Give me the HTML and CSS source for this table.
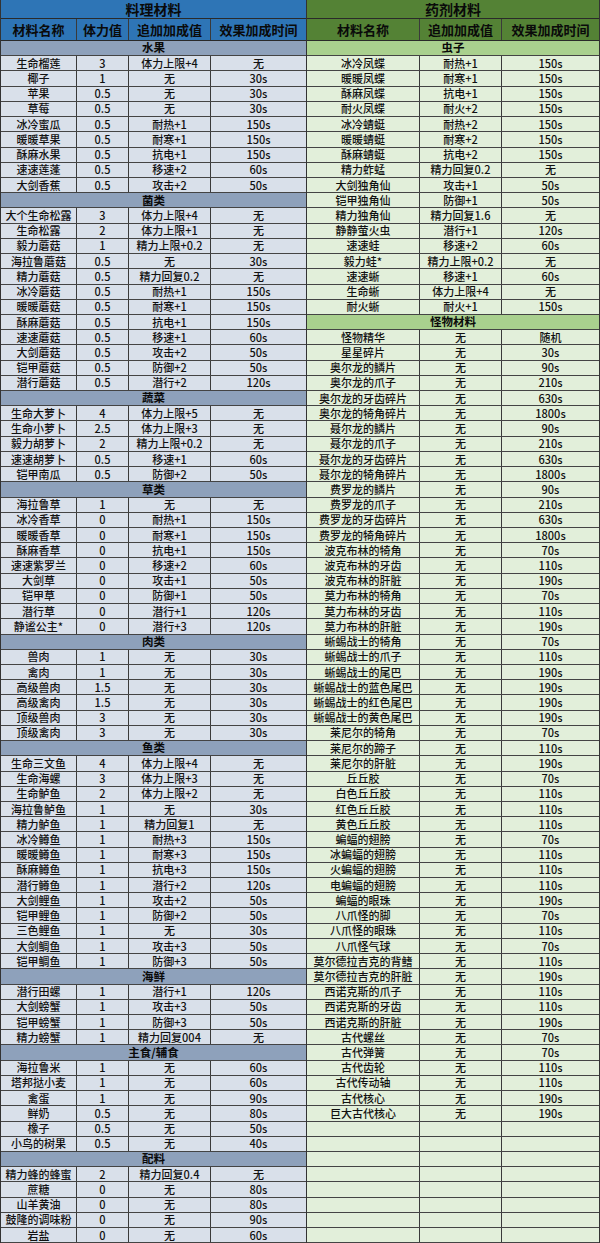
FILE: index.html
```html
<!DOCTYPE html>
<html lang="zh-CN">
<head>
<meta charset="utf-8">
<title>材料表</title>
<link rel="stylesheet" href="styles.css">
</head>
<body>
<div class="sheet">
  <section class="panel cook">
    <div class="title">料理材料</div>
    <div class="row head"><span>材料名称</span><span>体力值</span><span>追加加成值</span><span>效果加成时间</span></div>
    <div class="row cat">水果</div>
    <div class="row"><span>生命榴莲</span><span>3</span><span>体力上限+4</span><span>无</span></div>
    <div class="row"><span>椰子</span><span>1</span><span>无</span><span>30s</span></div>
    <div class="row"><span>苹果</span><span>0.5</span><span>无</span><span>30s</span></div>
    <div class="row"><span>草莓</span><span>0.5</span><span>无</span><span>30s</span></div>
    <div class="row"><span>冰冷蜜瓜</span><span>0.5</span><span>耐热+1</span><span>150s</span></div>
    <div class="row"><span>暖暖草果</span><span>0.5</span><span>耐寒+1</span><span>150s</span></div>
    <div class="row"><span>酥麻水果</span><span>0.5</span><span>抗电+1</span><span>150s</span></div>
    <div class="row"><span>速速莲蓬</span><span>0.5</span><span>移速+2</span><span>60s</span></div>
    <div class="row"><span>大剑香蕉</span><span>0.5</span><span>攻击+2</span><span>50s</span></div>
    <div class="row cat">菌类</div>
    <div class="row"><span>大个生命松露</span><span>3</span><span>体力上限+4</span><span>无</span></div>
    <div class="row"><span>生命松露</span><span>2</span><span>体力上限+1</span><span>无</span></div>
    <div class="row"><span>毅力蘑菇</span><span>1</span><span>精力上限+0.2</span><span>无</span></div>
    <div class="row"><span>海拉鲁蘑菇</span><span>0.5</span><span>无</span><span>30s</span></div>
    <div class="row"><span>精力蘑菇</span><span>0.5</span><span>精力回复0.2</span><span>无</span></div>
    <div class="row"><span>冰冷蘑菇</span><span>0.5</span><span>耐热+1</span><span>150s</span></div>
    <div class="row"><span>暖暖蘑菇</span><span>0.5</span><span>耐寒+1</span><span>150s</span></div>
    <div class="row"><span>酥麻蘑菇</span><span>0.5</span><span>抗电+1</span><span>150s</span></div>
    <div class="row"><span>速速蘑菇</span><span>0.5</span><span>移速+1</span><span>60s</span></div>
    <div class="row"><span>大剑蘑菇</span><span>0.5</span><span>攻击+2</span><span>50s</span></div>
    <div class="row"><span>铠甲蘑菇</span><span>0.5</span><span>防御+2</span><span>50s</span></div>
    <div class="row"><span>潜行蘑菇</span><span>0.5</span><span>潜行+2</span><span>120s</span></div>
    <div class="row cat">蔬菜</div>
    <div class="row"><span>生命大萝卜</span><span>4</span><span>体力上限+5</span><span>无</span></div>
    <div class="row"><span>生命小萝卜</span><span>2.5</span><span>体力上限+3</span><span>无</span></div>
    <div class="row"><span>毅力胡萝卜</span><span>2</span><span>精力上限+0.2</span><span>无</span></div>
    <div class="row"><span>速速胡萝卜</span><span>0.5</span><span>移速+1</span><span>60s</span></div>
    <div class="row"><span>铠甲南瓜</span><span>0.5</span><span>防御+2</span><span>50s</span></div>
    <div class="row cat">草类</div>
    <div class="row"><span>海拉鲁草</span><span>1</span><span>无</span><span>无</span></div>
    <div class="row"><span>冰冷香草</span><span>0</span><span>耐热+1</span><span>150s</span></div>
    <div class="row"><span>暖暖香草</span><span>0</span><span>耐寒+1</span><span>150s</span></div>
    <div class="row"><span>酥麻香草</span><span>0</span><span>抗电+1</span><span>150s</span></div>
    <div class="row"><span>速速紫罗兰</span><span>0</span><span>移速+2</span><span>60s</span></div>
    <div class="row"><span>大剑草</span><span>0</span><span>攻击+1</span><span>50s</span></div>
    <div class="row"><span>铠甲草</span><span>0</span><span>防御+1</span><span>50s</span></div>
    <div class="row"><span>潜行草</span><span>0</span><span>潜行+1</span><span>120s</span></div>
    <div class="row"><span>静谧公主*</span><span>0</span><span>潜行+3</span><span>120s</span></div>
    <div class="row cat">肉类</div>
    <div class="row"><span>兽肉</span><span>1</span><span>无</span><span>30s</span></div>
    <div class="row"><span>禽肉</span><span>1</span><span>无</span><span>30s</span></div>
    <div class="row"><span>高级兽肉</span><span>1.5</span><span>无</span><span>30s</span></div>
    <div class="row"><span>高级禽肉</span><span>1.5</span><span>无</span><span>30s</span></div>
    <div class="row"><span>顶级兽肉</span><span>3</span><span>无</span><span>30s</span></div>
    <div class="row"><span>顶级禽肉</span><span>3</span><span>无</span><span>30s</span></div>
    <div class="row cat">鱼类</div>
    <div class="row"><span>生命三文鱼</span><span>4</span><span>体力上限+4</span><span>无</span></div>
    <div class="row"><span>生命海螺</span><span>3</span><span>体力上限+3</span><span>无</span></div>
    <div class="row"><span>生命鲈鱼</span><span>2</span><span>体力上限+2</span><span>无</span></div>
    <div class="row"><span>海拉鲁鲈鱼</span><span>1</span><span>无</span><span>30s</span></div>
    <div class="row"><span>精力鲈鱼</span><span>1</span><span>精力回复1</span><span>无</span></div>
    <div class="row"><span>冰冷鳟鱼</span><span>1</span><span>耐热+3</span><span>150s</span></div>
    <div class="row"><span>暖暖鳟鱼</span><span>1</span><span>耐寒+3</span><span>150s</span></div>
    <div class="row"><span>酥麻鳟鱼</span><span>1</span><span>抗电+3</span><span>150s</span></div>
    <div class="row"><span>潜行鳟鱼</span><span>1</span><span>潜行+2</span><span>120s</span></div>
    <div class="row"><span>大剑鲤鱼</span><span>1</span><span>攻击+2</span><span>50s</span></div>
    <div class="row"><span>铠甲鲤鱼</span><span>1</span><span>防御+2</span><span>50s</span></div>
    <div class="row"><span>三色鲤鱼</span><span>1</span><span>无</span><span>30s</span></div>
    <div class="row"><span>大剑鲷鱼</span><span>1</span><span>攻击+3</span><span>50s</span></div>
    <div class="row"><span>铠甲鲷鱼</span><span>1</span><span>防御+3</span><span>50s</span></div>
    <div class="row cat">海鲜</div>
    <div class="row"><span>潜行田螺</span><span>1</span><span>潜行+1</span><span>120s</span></div>
    <div class="row"><span>大剑螃蟹</span><span>1</span><span>攻击+3</span><span>50s</span></div>
    <div class="row"><span>铠甲螃蟹</span><span>1</span><span>防御+3</span><span>50s</span></div>
    <div class="row"><span>精力螃蟹</span><span>1</span><span>精力回复004</span><span>无</span></div>
    <div class="row cat">主食/辅食</div>
    <div class="row"><span>海拉鲁米</span><span>1</span><span>无</span><span>60s</span></div>
    <div class="row"><span>塔邦挞小麦</span><span>1</span><span>无</span><span>60s</span></div>
    <div class="row"><span>禽蛋</span><span>1</span><span>无</span><span>90s</span></div>
    <div class="row"><span>鲜奶</span><span>0.5</span><span>无</span><span>80s</span></div>
    <div class="row"><span>橡子</span><span>0.5</span><span>无</span><span>50s</span></div>
    <div class="row"><span>小鸟的树果</span><span>0.5</span><span>无</span><span>40s</span></div>
    <div class="row cat">配料</div>
    <div class="row"><span>精力蜂的蜂蜜</span><span>2</span><span>精力回复0.4</span><span>无</span></div>
    <div class="row"><span>蔗糖</span><span>0</span><span>无</span><span>80s</span></div>
    <div class="row"><span>山羊黄油</span><span>0</span><span>无</span><span>80s</span></div>
    <div class="row"><span>鼓隆的调味粉</span><span>0</span><span>无</span><span>90s</span></div>
    <div class="row"><span>岩盐</span><span>0</span><span>无</span><span>60s</span></div>
  </section>
  <section class="panel potion">
    <div class="title">药剂材料</div>
    <div class="row head"><span>材料名称</span><span>追加加成值</span><span>效果加成时间</span></div>
    <div class="row cat">虫子</div>
    <div class="row"><span>冰冷凤蝶</span><span>耐热+1</span><span>150s</span></div>
    <div class="row"><span>暖暖凤蝶</span><span>耐寒+1</span><span>150s</span></div>
    <div class="row"><span>酥麻凤蝶</span><span>抗电+1</span><span>150s</span></div>
    <div class="row"><span>耐火凤蝶</span><span>耐火+2</span><span>150s</span></div>
    <div class="row"><span>冰冷蜻蜓</span><span>耐热+2</span><span>150s</span></div>
    <div class="row"><span>暖暖蜻蜓</span><span>耐寒+2</span><span>150s</span></div>
    <div class="row"><span>酥麻蜻蜓</span><span>抗电+2</span><span>150s</span></div>
    <div class="row"><span>精力蚱蜢</span><span>精力回复0.2</span><span>无</span></div>
    <div class="row"><span>大剑独角仙</span><span>攻击+1</span><span>50s</span></div>
    <div class="row"><span>铠甲独角仙</span><span>防御+1</span><span>50s</span></div>
    <div class="row"><span>精力独角仙</span><span>精力回复1.6</span><span>无</span></div>
    <div class="row"><span>静静萤火虫</span><span>潜行+1</span><span>120s</span></div>
    <div class="row"><span>速速蛙</span><span>移速+2</span><span>60s</span></div>
    <div class="row"><span>毅力蛙*</span><span>精力上限+0.2</span><span>无</span></div>
    <div class="row"><span>速速蜥</span><span>移速+1</span><span>60s</span></div>
    <div class="row"><span>生命蜥</span><span>体力上限+4</span><span>无</span></div>
    <div class="row"><span>耐火蜥</span><span>耐火+1</span><span>150s</span></div>
    <div class="row cat">怪物材料</div>
    <div class="row"><span>怪物精华</span><span>无</span><span>随机</span></div>
    <div class="row"><span>星星碎片</span><span>无</span><span>30s</span></div>
    <div class="row"><span>奥尔龙的鳞片</span><span>无</span><span>90s</span></div>
    <div class="row"><span>奥尔龙的爪子</span><span>无</span><span>210s</span></div>
    <div class="row"><span>奥尔龙的牙齿碎片</span><span>无</span><span>630s</span></div>
    <div class="row"><span>奥尔龙的犄角碎片</span><span>无</span><span>1800s</span></div>
    <div class="row"><span>聂尔龙的鳞片</span><span>无</span><span>90s</span></div>
    <div class="row"><span>聂尔龙的爪子</span><span>无</span><span>210s</span></div>
    <div class="row"><span>聂尔龙的牙齿碎片</span><span>无</span><span>630s</span></div>
    <div class="row"><span>聂尔龙的犄角碎片</span><span>无</span><span>1800s</span></div>
    <div class="row"><span>费罗龙的鳞片</span><span>无</span><span>90s</span></div>
    <div class="row"><span>费罗龙的爪子</span><span>无</span><span>210s</span></div>
    <div class="row"><span>费罗龙的牙齿碎片</span><span>无</span><span>630s</span></div>
    <div class="row"><span>费罗龙的犄角碎片</span><span>无</span><span>1800s</span></div>
    <div class="row"><span>波克布林的犄角</span><span>无</span><span>70s</span></div>
    <div class="row"><span>波克布林的牙齿</span><span>无</span><span>110s</span></div>
    <div class="row"><span>波克布林的肝脏</span><span>无</span><span>190s</span></div>
    <div class="row"><span>莫力布林的犄角</span><span>无</span><span>70s</span></div>
    <div class="row"><span>莫力布林的牙齿</span><span>无</span><span>110s</span></div>
    <div class="row"><span>莫力布林的肝脏</span><span>无</span><span>190s</span></div>
    <div class="row"><span>蜥蜴战士的犄角</span><span>无</span><span>70s</span></div>
    <div class="row"><span>蜥蜴战士的爪子</span><span>无</span><span>110s</span></div>
    <div class="row"><span>蜥蜴战士的尾巴</span><span>无</span><span>190s</span></div>
    <div class="row"><span>蜥蜴战士的蓝色尾巴</span><span>无</span><span>190s</span></div>
    <div class="row"><span>蜥蜴战士的红色尾巴</span><span>无</span><span>190s</span></div>
    <div class="row"><span>蜥蜴战士的黄色尾巴</span><span>无</span><span>190s</span></div>
    <div class="row"><span>莱尼尔的犄角</span><span>无</span><span>70s</span></div>
    <div class="row"><span>莱尼尔的蹄子</span><span>无</span><span>110s</span></div>
    <div class="row"><span>莱尼尔的肝脏</span><span>无</span><span>190s</span></div>
    <div class="row"><span>丘丘胶</span><span>无</span><span>70s</span></div>
    <div class="row"><span>白色丘丘胶</span><span>无</span><span>110s</span></div>
    <div class="row"><span>红色丘丘胶</span><span>无</span><span>110s</span></div>
    <div class="row"><span>黄色丘丘胶</span><span>无</span><span>110s</span></div>
    <div class="row"><span>蝙蝠的翅膀</span><span>无</span><span>70s</span></div>
    <div class="row"><span>冰蝙蝠的翅膀</span><span>无</span><span>110s</span></div>
    <div class="row"><span>火蝙蝠的翅膀</span><span>无</span><span>110s</span></div>
    <div class="row"><span>电蝙蝠的翅膀</span><span>无</span><span>110s</span></div>
    <div class="row"><span>蝙蝠的眼珠</span><span>无</span><span>190s</span></div>
    <div class="row"><span>八爪怪的脚</span><span>无</span><span>70s</span></div>
    <div class="row"><span>八爪怪的眼珠</span><span>无</span><span>110s</span></div>
    <div class="row"><span>八爪怪气球</span><span>无</span><span>70s</span></div>
    <div class="row"><span>莫尔德拉吉克的背鳍</span><span>无</span><span>110s</span></div>
    <div class="row"><span>莫尔德拉吉克的肝脏</span><span>无</span><span>190s</span></div>
    <div class="row"><span>西诺克斯的爪子</span><span>无</span><span>110s</span></div>
    <div class="row"><span>西诺克斯的牙齿</span><span>无</span><span>110s</span></div>
    <div class="row"><span>西诺克斯的肝脏</span><span>无</span><span>190s</span></div>
    <div class="row"><span>古代螺丝</span><span>无</span><span>70s</span></div>
    <div class="row"><span>古代弹簧</span><span>无</span><span>70s</span></div>
    <div class="row"><span>古代齿轮</span><span>无</span><span>110s</span></div>
    <div class="row"><span>古代传动轴</span><span>无</span><span>110s</span></div>
    <div class="row"><span>古代核心</span><span>无</span><span>190s</span></div>
    <div class="row"><span>巨大古代核心</span><span>无</span><span>190s</span></div>
    <div class="row"><span></span><span></span><span></span></div>
    <div class="row"><span></span><span></span><span></span></div>
    <div class="row"><span></span><span></span><span></span></div>
    <div class="row"><span></span><span></span><span></span></div>
    <div class="row"><span></span><span></span><span></span></div>
    <div class="row"><span></span><span></span><span></span></div>
    <div class="row"><span></span><span></span><span></span></div>
    <div class="row"><span></span><span></span><span></span></div>
  </section>
</div>
</body>
</html>
```

FILE: styles.css
```css
* { box-sizing: border-box; }

html, body {
  margin: 0;
  padding: 0;
  background: #ffffff;
}

body {
  font-family: "Noto Sans CJK SC", "Noto Sans", sans-serif;
  color: #111;
}

.sheet {
  display: flex;
  width: 600px;
  height: 1243px;
}

.panel {
  display: flex;
  flex-direction: column;
  height: 100%;
  border-right: 1px solid #333;
}

.cook {
  width: 307px;
  border-left: 1px solid #333;
  background: #d9e0ea;
}

.potion {
  width: 293px;
  background: #e2efda;
}

.title {
  flex: 0 0 19px;
  display: flex;
  align-items: center;
  justify-content: center;
  font-size: 14px;
  font-weight: bold;
  color: #0a0a0a;
  border-bottom: 1px solid #2a2a2a;
  line-height: 1;
}

.cook .title { background: #2e75b6; }
.potion .title { background: #548235; }

.row {
  flex: 1 1 0;
  min-height: 0;
  display: grid;
  border-bottom: 1px solid #444;
  font-size: 11px;
  font-weight: 500;
  line-height: 1;
}

.cook .row { grid-template-columns: 76px 52px 82px 1fr; }
.potion .row { grid-template-columns: 113px 82px 1fr; }

.row > span {
  display: flex;
  align-items: center;
  justify-content: center;
  white-space: nowrap;
  overflow: hidden;
  border-right: 1px solid #3a3a3a;
}

.row > span:last-child { border-right: 0; }

.row.head {
  flex: 0 0 22px;
  font-size: 13px;
  font-weight: bold;
  color: #0a0a0a;
  border-bottom: 1px solid #2a2a2a;
}

.cook .row.head { background: #2e75b6; }
.potion .row.head { background: #548235; }

.row.cat {
  display: flex;
  align-items: center;
  justify-content: center;
  font-weight: bold;
  font-size: 11.5px;
  color: #0a0a0a;
}

.cook .row.cat { background: #8ea1bb; }
.potion .row.cat { background: #a9d08e; }
```
